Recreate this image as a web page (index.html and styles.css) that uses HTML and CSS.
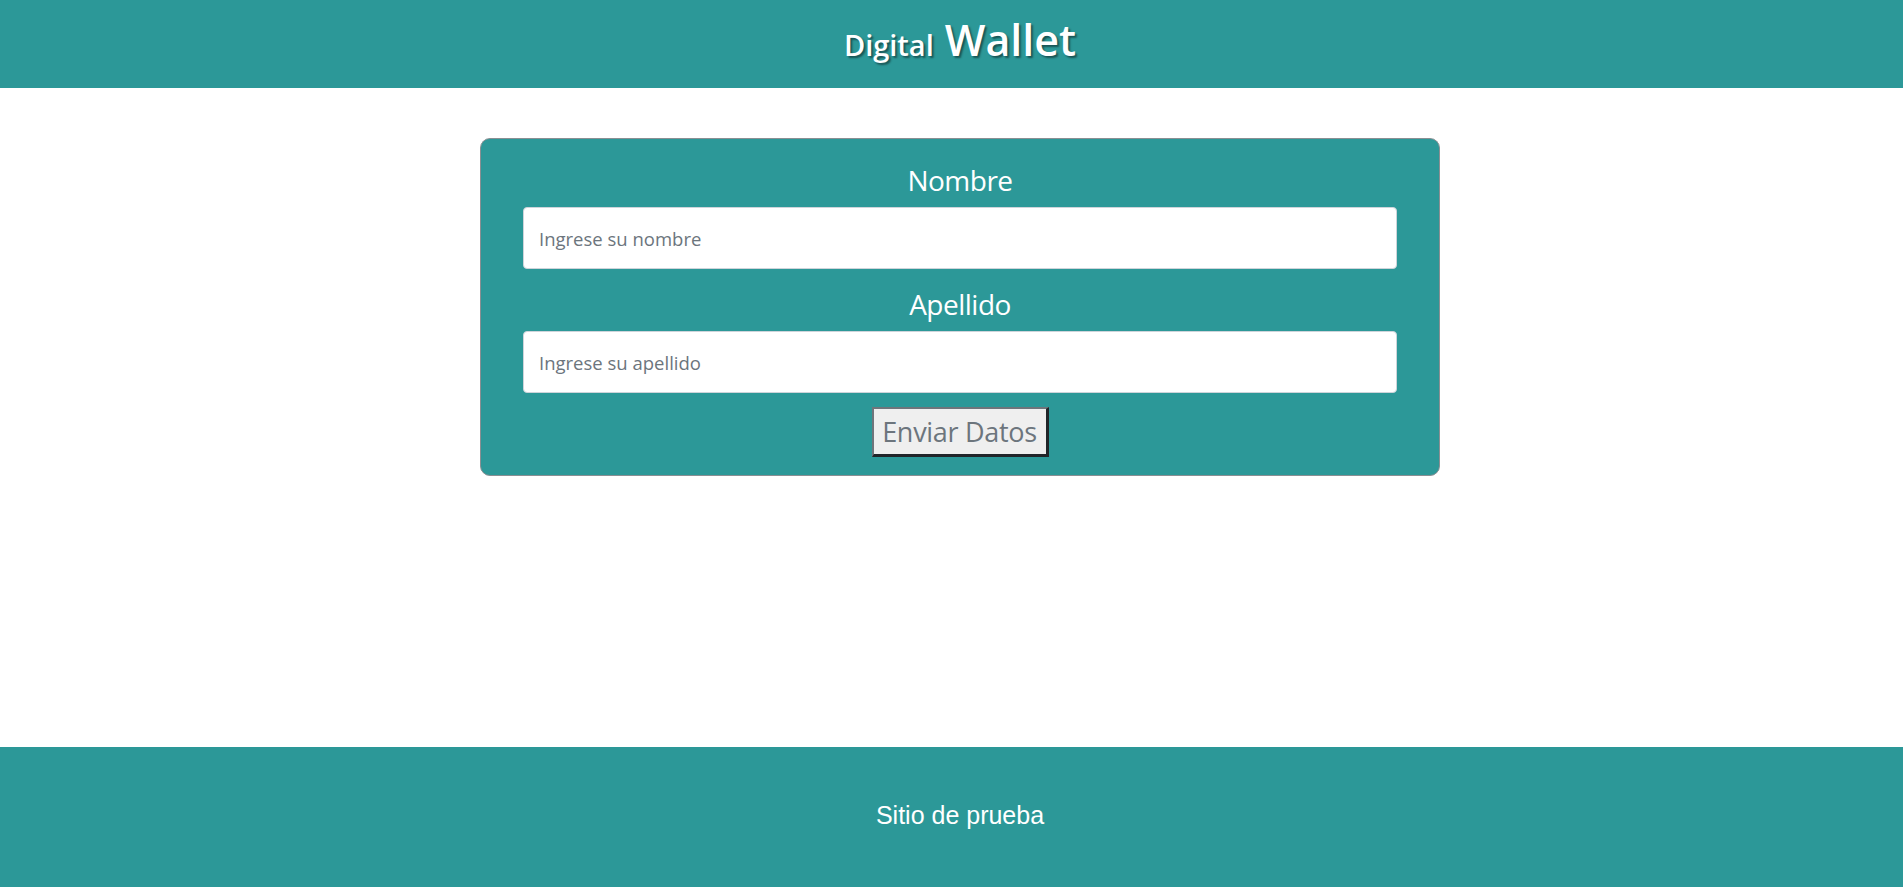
FILE: index.html
```html
<!DOCTYPE html>
<html lang="es">
<head>
<meta charset="utf-8">
<title>Digital Wallet</title>
<link rel="stylesheet" href="styles.css">
</head>
<body>
<div class="page">
  <header class="site-header">
    <h1 class="brand"><span class="brand-small">Digital</span> <span class="brand-big">Wallet</span></h1>
  </header>
  <main class="content">
    <form class="card">
      <label class="field-label" for="nombre">Nombre</label>
      <input class="field-input" id="nombre" type="text" placeholder="Ingrese su nombre">
      <label class="field-label field-label-next" for="apellido">Apellido</label>
      <input class="field-input" id="apellido" type="text" placeholder="Ingrese su apellido">
      <button class="submit" type="button">Enviar Datos</button>
    </form>
  </main>
  <footer class="site-footer">
    <p class="footer-text">Sitio de prueba</p>
  </footer>
</div>
</body>
</html>
```

FILE: styles.css
```css
html, body {
  margin: 0;
  padding: 0;
  overflow-x: hidden;
}

body {
  font-family: "Open Sans", "Noto Sans", sans-serif;
  background: #ffffff;
}

.page {
  width: 1920px;
  min-height: 100vh;
  display: flex;
  flex-direction: column;
}

.site-header {
  height: 88px;
  background: #2c9898;
  display: flex;
  align-items: center;
  justify-content: center;
  padding-bottom: 9px;
  box-sizing: border-box;
}

.brand {
  margin: 0;
  color: #ffffff;
  font-weight: 600;
  line-height: 1;
  display: flex;
  align-items: baseline;
  gap: 11px;
  text-shadow: 2px 2px 2px rgba(0, 0, 0, 0.45);
}

.brand-small {
  font-size: 29px;
}

.brand-big {
  font-size: 43px;
}

.content {
  flex: 1;
  display: flex;
  justify-content: center;
  align-items: flex-start;
  padding-top: 50px;
}

.card {
  width: 960px;
  box-sizing: border-box;
  background: #2c9898;
  border: 1px solid #8a8f93;
  border-radius: 10px;
  padding: 23px 42px 18px;
  display: flex;
  flex-direction: column;
  align-items: center;
}

.field-label {
  color: #ffffff;
  font-size: 28px;
  letter-spacing: -0.5px;
  line-height: 36px;
  margin-bottom: 9px;
}

.field-label-next {
  margin-top: 17px;
  margin-bottom: 9px;
}

.field-input {
  width: 100%;
  height: 62px;
  box-sizing: border-box;
  border: 1px solid #ced4da;
  border-radius: 4px;
  background: #ffffff;
  padding: 0 15px;
  font-family: "Open Sans", "Noto Sans", sans-serif;
  font-size: 18.5px;
  color: #212529;
}

.field-input::placeholder {
  color: #6c757d;
}

.submit {
  margin-top: 14px;
  width: 177px;
  height: 50px;
  box-sizing: border-box;
  background: #efefef;
  border-style: solid;
  border-width: 2px 3px 3px 2px;
  border-color: #6f757b #212529 #212529 #6f757b;
  padding: 0;
  font-family: "Open Sans", "Noto Sans", sans-serif;
  font-size: 27px;
  letter-spacing: -0.3px;
  color: #6c757d;
  line-height: 1;
}

.site-footer {
  height: 140px;
  background: #2c9898;
  display: flex;
  align-items: center;
  justify-content: center;
  padding-bottom: 3px;
  box-sizing: border-box;
}

.footer-text {
  margin: 0;
  color: #ffffff;
  font-family: "Liberation Sans", Arial, sans-serif;
  font-size: 25px;
}
```
